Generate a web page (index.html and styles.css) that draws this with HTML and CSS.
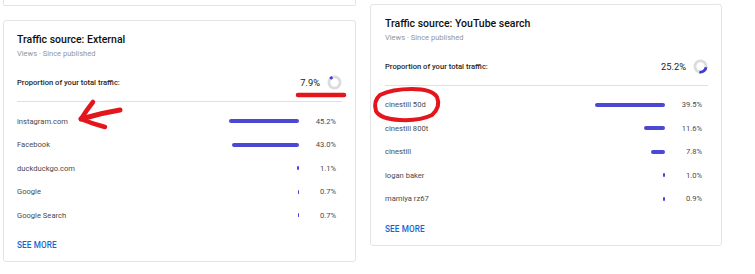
FILE: index.html
```html
<!DOCTYPE html>
<html lang="en">
<head>
<meta charset="utf-8">
<title>Traffic sources</title>
<link rel="stylesheet" href="styles.css">
</head>
<body>
<div class="page">
  <div class="col col-left">
    <div class="stub"></div>
    <section class="card">
      <h2 class="title">Traffic source: External</h2>
      <div class="sub">Views · Since published</div>
      <div class="prop">
        <span class="prop-label">Proportion of your total traffic:</span>
        <span class="prop-val">7.9%</span>
        <svg class="donut" width="15" height="15" viewBox="0 0 15 15">
          <circle cx="7.5" cy="7.5" r="5.6" fill="none" stroke="#dcdcdc" stroke-width="2.8"/>
          <circle cx="7.5" cy="7.5" r="5.6" fill="none" stroke="#3f3dd1" stroke-width="2.8" stroke-dasharray="2.8 40" transform="rotate(-140 7.5 7.5)"/>
        </svg>
      </div>
      <div class="rows">
        <div class="row"><span class="lbl">instagram.com</span><span class="track"><i class="bar" style="width:70px"></i></span><span class="pct">45.2%</span></div>
        <div class="row"><span class="lbl">Facebook</span><span class="track"><i class="bar" style="width:67px"></i></span><span class="pct">43.0%</span></div>
        <div class="row"><span class="lbl">duckduckgo.com</span><span class="track"><i class="bar" style="width:2px"></i></span><span class="pct">1.1%</span></div>
        <div class="row"><span class="lbl">Google</span><span class="track"><i class="bar" style="width:1.5px"></i></span><span class="pct">0.7%</span></div>
        <div class="row"><span class="lbl">Google Search</span><span class="track"><i class="bar" style="width:1.5px"></i></span><span class="pct">0.7%</span></div>
      </div>
      <a class="more">SEE MORE</a>
    </section>
  </div>
  <div class="col col-right">
    <section class="card card-right">
      <h2 class="title">Traffic source: YouTube search</h2>
      <div class="sub">Views · Since published</div>
      <div class="prop">
        <span class="prop-label">Proportion of your total traffic:</span>
        <span class="prop-val">25.2%</span>
        <svg class="donut" width="15" height="15" viewBox="0 0 15 15">
          <circle cx="7.5" cy="7.5" r="5.6" fill="none" stroke="#dcdcdc" stroke-width="2.8"/>
          <circle cx="7.5" cy="7.5" r="5.6" fill="none" stroke="#3f3dd1" stroke-width="2.8" stroke-dasharray="8.9 40" transform="rotate(8 7.5 7.5)"/>
        </svg>
      </div>
      <div class="rows">
        <div class="row"><span class="lbl">cinestill 50d</span><span class="track"><i class="bar" style="width:70px"></i></span><span class="pct">39.5%</span></div>
        <div class="row"><span class="lbl">cinestill 800t</span><span class="track"><i class="bar" style="width:20.6px"></i></span><span class="pct">11.6%</span></div>
        <div class="row"><span class="lbl">cinestill</span><span class="track"><i class="bar" style="width:13.8px"></i></span><span class="pct">7.8%</span></div>
        <div class="row"><span class="lbl">logan baker</span><span class="track"><i class="bar" style="width:2px"></i></span><span class="pct">1.0%</span></div>
        <div class="row"><span class="lbl">mamiya rz67</span><span class="track"><i class="bar" style="width:1.8px"></i></span><span class="pct">0.9%</span></div>
      </div>
      <a class="more">SEE MORE</a>
    </section>
  </div>
</div>
<svg class="marks" width="755" height="274" viewBox="0 0 755 274">
  <g fill="none" stroke="#e3161d" stroke-linecap="round" stroke-linejoin="round">
    <path d="M298 95 L344 95" stroke-width="4.5"/>
    <path d="M120 110 Q101 113 81 119" stroke-width="5"/>
    <path d="M93 102 Q86 111 81 119 Q93 124 105 127" stroke-width="4.5"/>
    <path d="M380 95 Q392 89 412 89 Q432 89 437 97 Q441 107 432 115 Q420 121 400 120 Q380 119 376 111 Q373 101 380 95 Z" stroke-width="4"/>
  </g>
</svg>
</body>
</html>
```
FILE: styles.css
```css
* { box-sizing: border-box; }
html, body { margin: 0; padding: 0; background: #ffffff; }
body {
  position: relative;
  width: 755px;
  height: 274px;
  overflow: hidden;
  font-family: Roboto, "Noto Sans", "Liberation Sans", sans-serif;
  color: #111;
}
.page {
  display: flex;
  gap: 14px;
  padding-left: 3px;
}
.col { display: flex; flex-direction: column; }
.col-left { width: 353px; gap: 14px; }
.col-right { width: 352px; padding-top: 3.5px; }
.stub {
  height: 6px;
  border: 1px solid #e4e4e4;
  border-top: none;
  border-radius: 0 0 2px 2px;
}
.card {
  height: 242px;
  border: 1px solid #e4e4e4;
  border-radius: 3px;
  padding: 12px 13px 0 13px;
  display: flex;
  flex-direction: column;
  background: #fff;
}
.card-right { padding-left: 14px; }
.title {
  margin: 0;
  font-size: 10.5px;
  line-height: 14px;
  font-weight: 500;
  color: #0f0f0f;
}
.sub {
  margin-top: 2px;
  font-size: 7.5px;
  line-height: 10px;
  color: #959595;
}
.prop {
  margin-top: 15.5px;
  height: 16px;
  display: flex;
  align-items: center;
}
.prop-label {
  flex: 1;
  font-size: 7.6px;
  font-weight: 500;
  color: #1e1e1e;
}
.prop-val {
  font-size: 9.3px;
  color: #222;
  margin-right: 7px;
}
.donut { display: block; }
.rows {
  margin-top: 10.5px;
  border-top: 1px solid #e0e0e0;
  padding-top: 7.5px;
}
.row {
  height: 23.5px;
  display: flex;
  align-items: center;
  padding-right: 6px;
  font-size: 7.6px;
  color: #4a4a4a;
}
.lbl { flex: 1; }
.track {
  width: 70px;
  display: flex;
  justify-content: flex-end;
}
.bar {
  display: block;
  height: 4px;
  border-radius: 2px;
  background: #4b49d4;
}
.pct {
  width: 37px;
  text-align: right;
}
.more {
  margin-top: 12px;
  font-size: 8.2px;
  line-height: 12px;
  font-weight: 500;
  color: #1565d0;
  letter-spacing: 0.1px;
}
.marks {
  position: absolute;
  left: 0;
  top: 0;
  pointer-events: none;
}
```
